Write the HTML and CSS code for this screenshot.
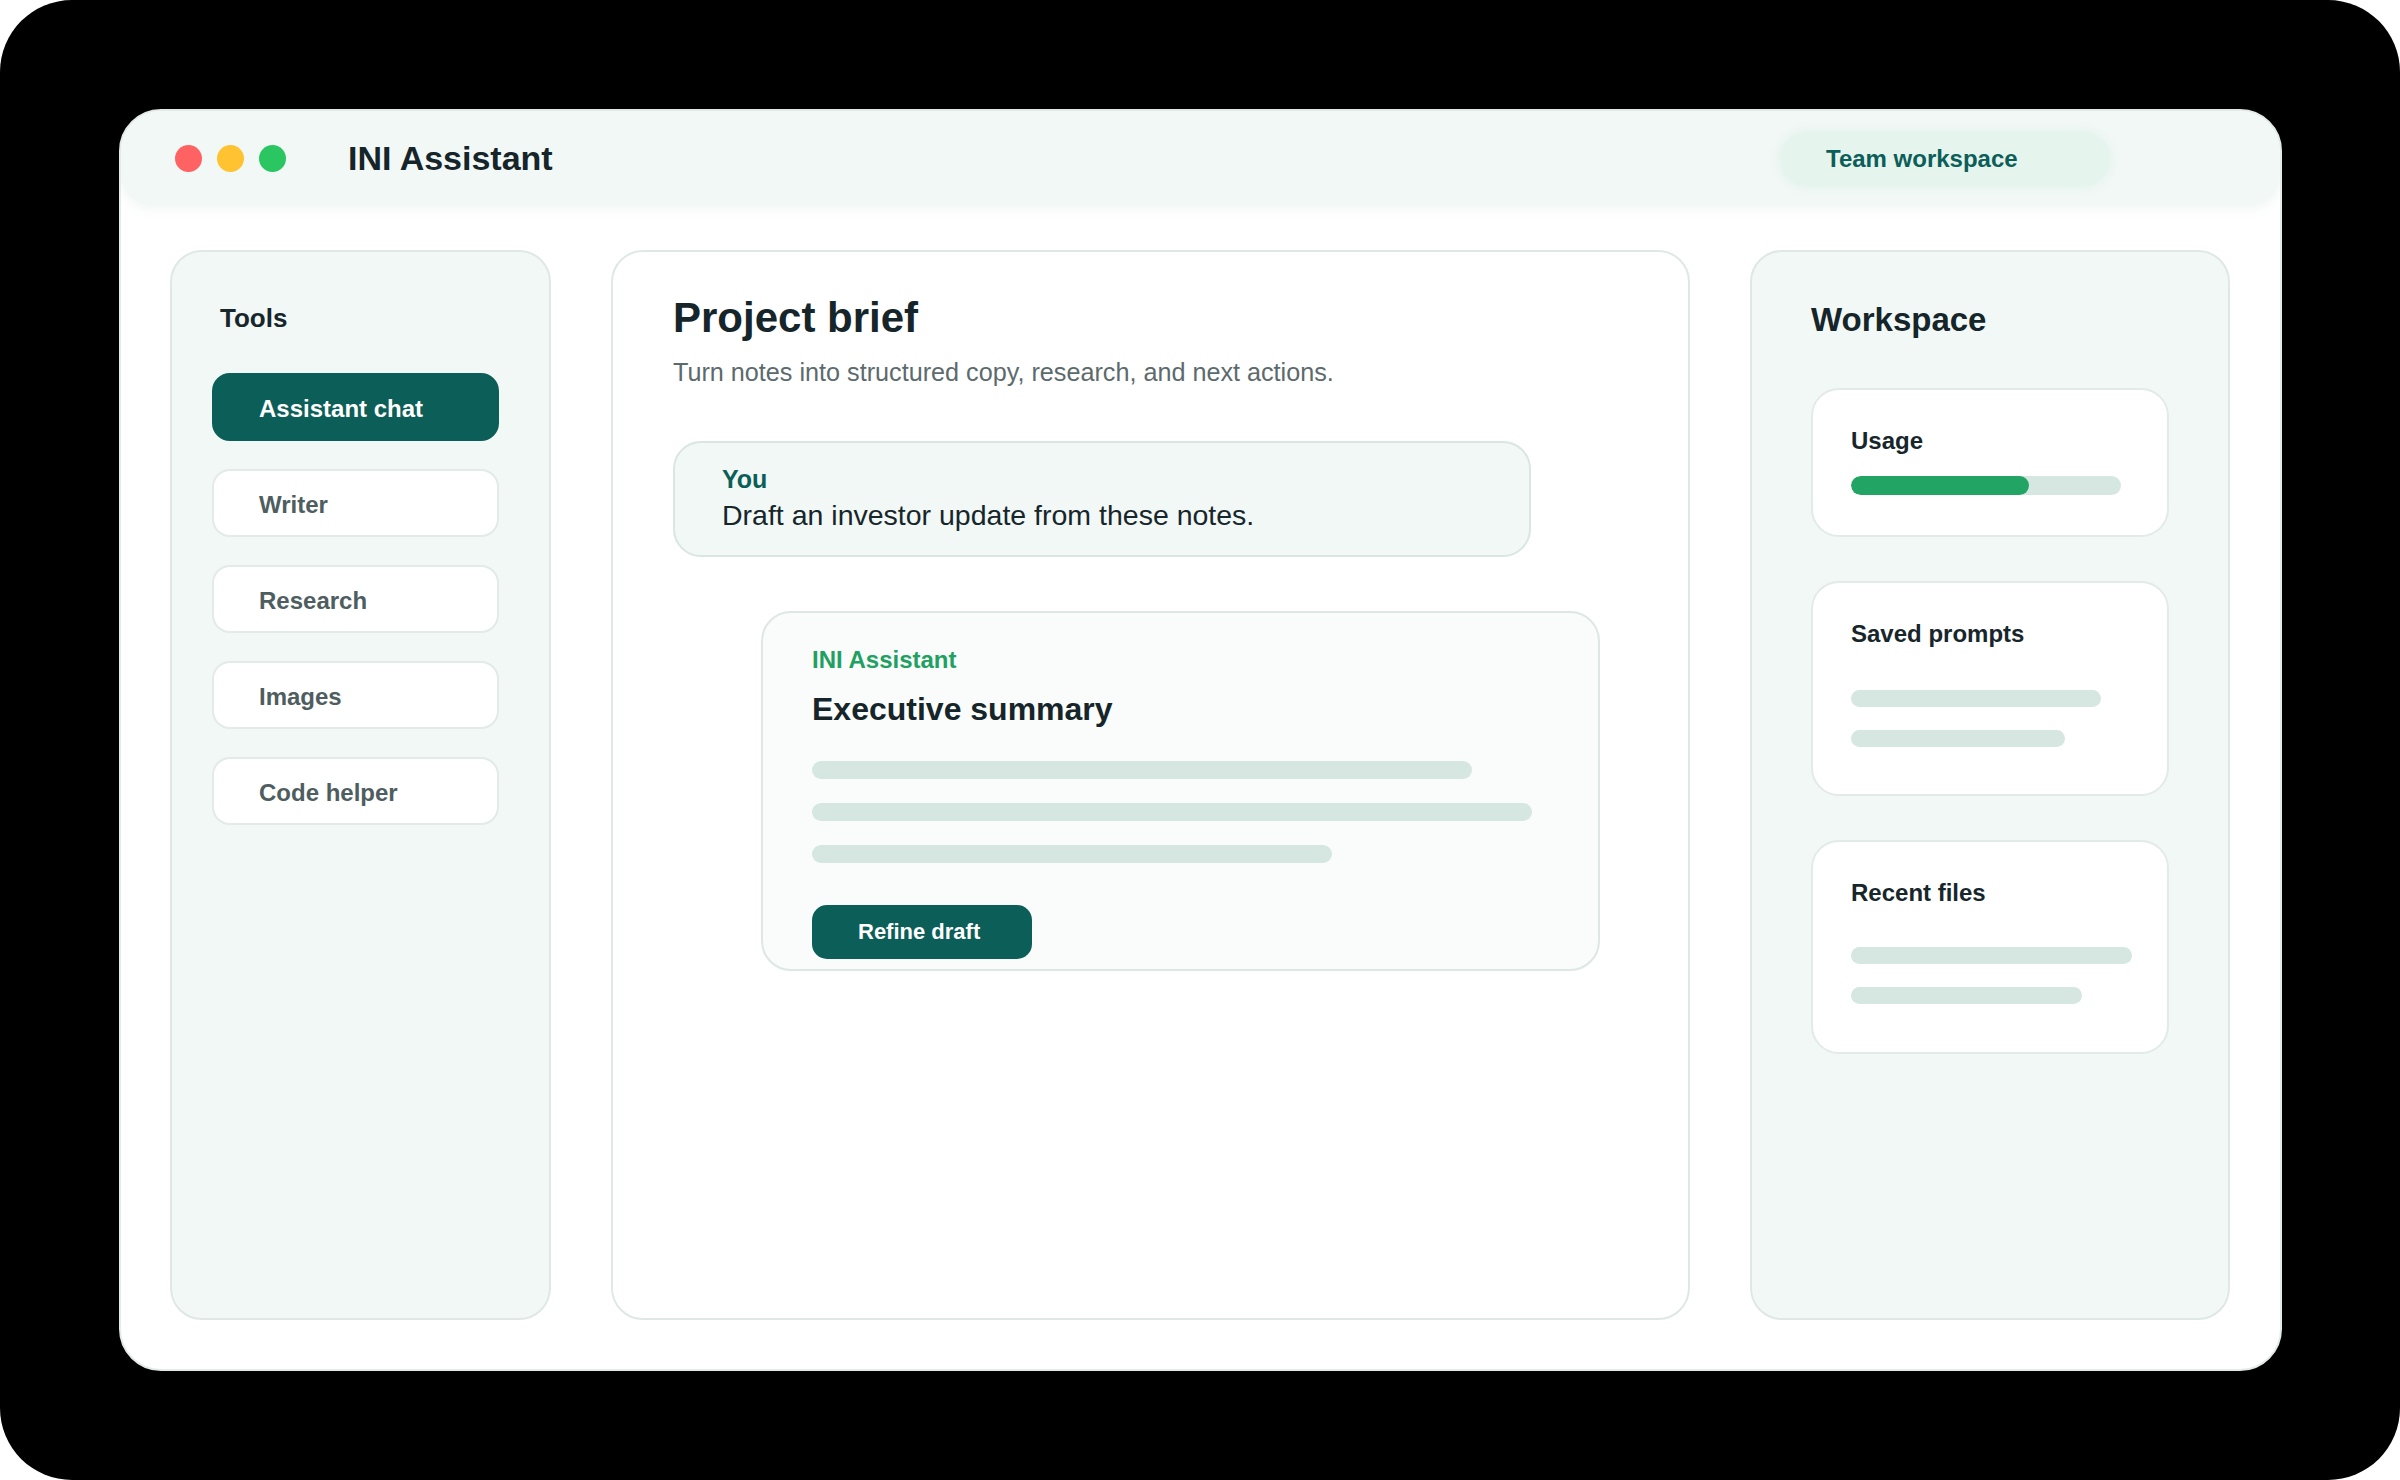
FILE: index.html
```html
<!DOCTYPE html>
<html lang="en">
<head>
<meta charset="utf-8">
<title>INI Assistant</title>
<link rel="stylesheet" href="styles.css">
</head>
<body>
<div class="screen">
  <div class="window">
    <header class="titlebar">
      <div class="lights">
        <span class="light red"></span>
        <span class="light yellow"></span>
        <span class="light green"></span>
      </div>
      <div class="app-title">INI Assistant</div>
      <div class="pill">Team workspace</div>
    </header>
    <div class="body">
      <aside class="sidebar">
        <div class="side-title">Tools</div>
        <nav class="nav">
          <div class="nav-item active">Assistant chat</div>
          <div class="nav-item">Writer</div>
          <div class="nav-item">Research</div>
          <div class="nav-item">Images</div>
          <div class="nav-item">Code helper</div>
        </nav>
      </aside>
      <main class="main">
        <h1 class="main-title">Project brief</h1>
        <p class="subtitle">Turn notes into structured copy, research, and next actions.</p>
        <div class="bubble">
          <div class="bubble-who">You</div>
          <div class="bubble-text">Draft an investor update from these notes.</div>
        </div>
        <div class="reply">
          <div class="reply-who">INI Assistant</div>
          <div class="reply-title">Executive summary</div>
          <div class="skel-group">
            <div class="skel w1"></div>
            <div class="skel w2"></div>
            <div class="skel w3"></div>
          </div>
          <button class="btn">Refine draft</button>
        </div>
      </main>
      <aside class="panel">
        <div class="panel-title">Workspace</div>
        <div class="cards">
          <div class="card usage">
            <div class="card-title">Usage</div>
            <div class="bar"><div class="bar-fill"></div></div>
          </div>
          <div class="card saved">
            <div class="card-title">Saved prompts</div>
            <div class="card-lines">
              <div class="line l-s1"></div>
              <div class="line l-s2"></div>
            </div>
          </div>
          <div class="card recent">
            <div class="card-title">Recent files</div>
            <div class="card-lines">
              <div class="line l-r1"></div>
              <div class="line l-r2"></div>
            </div>
          </div>
        </div>
      </aside>
    </div>
  </div>
</div>
</body>
</html>
```

FILE: styles.css
```css
* { box-sizing: border-box; }

html, body {
  margin: 0;
  padding: 0;
  background: #ffffff;
}

body {
  font-family: "Liberation Sans", Arial, sans-serif;
  color: #17262b;
}

.screen {
  width: 2400px;
  height: 1480px;
  background: #000000;
  border-radius: 72px;
  padding: 109px 118px 109px 119px;
}

.window {
  width: 2163px;
  height: 1262px;
  background: #ffffff;
  border: 2px solid #e3ebe8;
  border-radius: 42px;
  display: flex;
  flex-direction: column;
  overflow: hidden;
}

/* Title bar */
.titlebar {
  height: 94px;
  flex: none;
  display: flex;
  align-items: center;
  padding: 0 170px 0 54px;
  background: #f2f8f6;
  border-radius: 40px 40px 30px 30px;
  box-shadow: 0 4px 14px rgba(40, 110, 90, 0.06);
}

.lights {
  display: flex;
  gap: 15px;
}

.light {
  width: 27px;
  height: 27px;
  border-radius: 50%;
}
.light.red { background: #ff6262; }
.light.yellow { background: #ffc230; }
.light.green { background: #2ac662; }

.app-title {
  margin-left: 62px;
  font-size: 34px;
  font-weight: 700;
  color: #15252a;
}

.pill {
  margin-left: auto;
  margin-top: 2px;
  width: 330px;
  height: 54px;
  display: flex;
  align-items: center;
  padding-left: 46px;
  border-radius: 27px;
  background: #e6f4ee;
  box-shadow: 0 0 8px 2px rgba(226, 242, 235, 0.9);
  color: #0c5e58;
  font-size: 24px;
  font-weight: 700;
}

/* Body grid */
.body {
  flex: 1;
  display: grid;
  grid-template-columns: 381px 1079px 480px;
  column-gap: 60px;
  padding: 45px 50px 49px 49px;
}

/* Sidebar */
.sidebar {
  background: #f2f8f6;
  border: 2px solid #dfe8e5;
  border-radius: 32px;
  padding: 50px 40px 0 40px;
}

.side-title {
  margin-left: 8px;
  margin-top: 1px;
  font-size: 26px;
  line-height: 1.2;
  font-weight: 700;
  color: #17262b;
}

.nav {
  margin-top: 39px;
  display: flex;
  flex-direction: column;
  gap: 28px;
}

.nav-item {
  width: 287px;
  height: 68px;
  display: flex;
  align-items: center;
  padding: 3px 0 0 45px;
  background: #ffffff;
  border: 2px solid #e2ebe8;
  border-radius: 18px;
  font-size: 24px;
  font-weight: 700;
  color: #4e5d60;
}

.nav-item.active {
  background: #0c5e58;
  border-color: #0c5e58;
  color: #ffffff;
}

/* Main */
.main {
  background: #ffffff;
  border: 2px solid #dfe8e5;
  border-radius: 32px;
  padding: 41px 60px 0 60px;
}

.main-title {
  margin: 0;
  font-size: 42px;
  line-height: 1.2;
  font-weight: 700;
  color: #15252a;
}

.subtitle {
  margin: 14px 0 0 0;
  font-size: 25.2px;
  line-height: 1.2;
  color: #5c6a6d;
}

.bubble {
  margin-top: 53px;
  width: 858px;
  height: 116px;
  background: #f1f8f5;
  border: 2px solid #d9e6e2;
  border-radius: 28px;
  padding: 21px 47px 0 47px;
}

.bubble-who {
  font-size: 25px;
  line-height: 1.2;
  font-weight: 700;
  color: #0c5e58;
}

.bubble-text {
  margin-top: 4px;
  font-size: 28.5px;
  line-height: 1.2;
  color: #17262b;
}

.reply {
  margin: 54px 0 0 88px;
  width: 839px;
  height: 360px;
  background: #f9fcfb;
  border: 2px solid #dde7e4;
  border-radius: 30px;
  padding: 33px 48px 0 49px;
}

.reply-who {
  font-size: 24px;
  line-height: 1.2;
  font-weight: 700;
  color: #21a062;
}

.reply-title {
  margin-top: 16px;
  font-size: 32px;
  line-height: 1.2;
  font-weight: 700;
  color: #15252a;
}

.skel-group {
  margin-top: 32px;
  display: flex;
  flex-direction: column;
  gap: 24px;
}

.skel {
  height: 18px;
  border-radius: 9px;
  background: #d6e6e1;
}
.skel.w1 { width: 660px; }
.skel.w2 { width: 720px; }
.skel.w3 { width: 520px; }

.btn {
  margin-top: 42px;
  width: 220px;
  height: 54px;
  border: none;
  border-radius: 15px;
  background: #0c5e58;
  color: #ffffff;
  font-family: "Liberation Sans", Arial, sans-serif;
  font-size: 22px;
  font-weight: 700;
  text-align: left;
  padding: 0 0 0 46px;
}

/* Right panel */
.panel {
  background: #f2f8f6;
  border: 2px solid #dfe8e5;
  border-radius: 32px;
  padding: 48px 57px 0 59px;
}

.panel-title {
  font-size: 33px;
  line-height: 1.2;
  font-weight: 700;
  color: #15252a;
}

.cards {
  margin-top: 48px;
  display: flex;
  flex-direction: column;
  gap: 44px;
}

.card {
  width: 358px;
  background: #ffffff;
  border: 2px solid #e2ebe8;
  border-radius: 28px;
  padding: 37px 38px 0 38px;
}

.card.usage { height: 149px; }
.card.saved { height: 215px; }
.card.recent { height: 214px; }

.card-title {
  font-size: 24px;
  line-height: 1.2;
  font-weight: 700;
  color: #17262b;
}

.bar {
  margin-top: 21px;
  width: 270px;
  height: 19px;
  border-radius: 10px;
  background: #d6e6e1;
  overflow: hidden;
}

.bar-fill {
  width: 66%;
  height: 100%;
  border-radius: 10px;
  background: #22a564;
}

.card-lines {
  margin-top: 42px;
  display: flex;
  flex-direction: column;
  gap: 23px;
}

.recent .card-lines {
  margin-top: 40px;
}

.line {
  height: 17px;
  border-radius: 9px;
  background: #d6e6e1;
}
.l-s1 { width: 250px; }
.l-s2 { width: 214px; }
.l-r1 { width: 281px; }
.l-r2 { width: 231px; }
```
